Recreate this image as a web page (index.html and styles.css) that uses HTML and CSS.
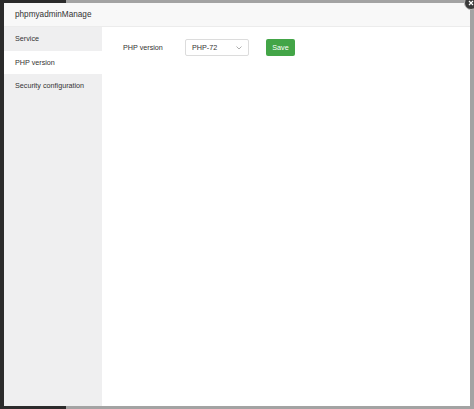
FILE: index.html
```html
<!DOCTYPE html>
<html>
<head>
<meta charset="utf-8">
<link rel="stylesheet" href="styles.css">
</head>
<body>
<div class="backdrop-dark"></div>
<div class="dialog">
  <div class="dialog-header">phpmyadminManage</div>
  <div class="dialog-body">
    <ul class="sidebar">
      <li class="nav-item">Service</li>
      <li class="nav-item active">PHP version</li>
      <li class="nav-item">Security configuration</li>
    </ul>
    <div class="content">
      <div class="form-row">
        <span class="form-label">PHP version</span>
        <div class="select">
          <span>PHP-72</span>
          <svg class="chevron" width="6" height="4" viewBox="0 0 6 4"><path d="M0.5 0.5 L3 3 L5.5 0.5" fill="none" stroke="#999" stroke-width="0.8"/></svg>
        </div>
        <button class="btn-save">Save</button>
      </div>
    </div>
  </div>
</div>
<div class="close-btn"><svg width="8" height="8" viewBox="0 0 8 8"><path d="M2 2 L6 6 M6 2 L2 6" stroke="#fff" stroke-width="1.2"/></svg></div>
</body>
</html>
```
FILE: styles.css
```css
html, body {
  margin: 0;
  padding: 0;
}
body {
  width: 474px;
  height: 409px;
  overflow: hidden;
  position: relative;
  background: #a3a3a3;
  font-family: "Liberation Sans", Arial, sans-serif;
  color: #333;
}
.backdrop-dark {
  position: absolute;
  left: 0;
  top: 0;
  width: 66px;
  height: 409px;
  background: #2b2b2b;
}
.dialog {
  position: absolute;
  left: 4px;
  top: 3px;
  width: 466px;
  height: 403px;
  background: #fff;
  display: flex;
  flex-direction: column;
}
.dialog-header {
  height: 23px;
  line-height: 23px;
  background: #f8f8f8;
  border-bottom: 1px solid #ececec;
  padding-left: 11px;
  font-size: 8.2px;
  color: #333;
}
.dialog-body {
  flex: 1;
  display: flex;
}
.sidebar {
  list-style: none;
  margin: 0;
  padding: 0;
  width: 98px;
  background: #efeff0;
}
.nav-item {
  height: 23.5px;
  line-height: 23.5px;
  padding-left: 11px;
  font-size: 7.2px;
  color: #333;
}
.nav-item.active {
  background: #fff;
}
.content {
  flex: 1;
  padding: 12px 0 0 21px;
}
.form-row {
  display: flex;
  align-items: center;
  height: 17px;
}
.form-label {
  width: 62px;
  font-size: 7.2px;
  color: #333;
}
.select {
  box-sizing: border-box;
  width: 64px;
  height: 17px;
  border: 1px solid #dcdcdc;
  border-radius: 2px;
  display: flex;
  align-items: center;
  justify-content: space-between;
  padding: 0 6px 0 6px;
  font-size: 7.2px;
  color: #333;
}
.chevron {
  display: block;
}
.btn-save {
  margin-left: 17px;
  width: 29px;
  height: 17px;
  border: none;
  border-radius: 2px;
  background: #43a547;
  color: #fff;
  font-family: "Liberation Sans", Arial, sans-serif;
  font-size: 7.2px;
  padding: 0;
}
.close-btn {
  position: absolute;
  left: 464px;
  top: -4px;
  width: 12px;
  height: 12px;
  border-radius: 50%;
  background: #3a3a3a;
  border: 1px solid #bbb;
  display: flex;
  align-items: center;
  justify-content: center;
}
```
